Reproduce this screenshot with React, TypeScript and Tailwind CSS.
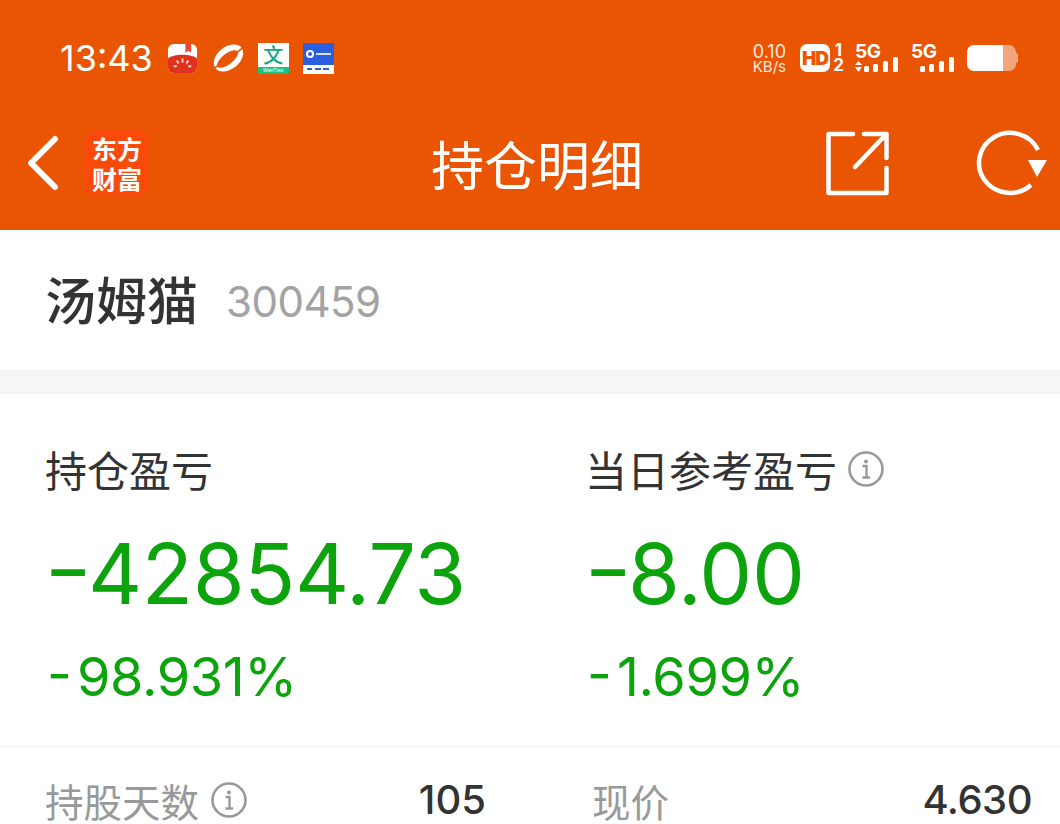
import React from "react";

const InfoIcon = ({ className = "" }: { className?: string }) => (
  <svg viewBox="0 0 36 36" className={className} fill="none" stroke="currentColor">
    <circle cx="18" cy="18" r="16.5" strokeWidth="2.6" />
    <circle cx="18" cy="10.5" r="2" fill="currentColor" stroke="none" />
    <path d="M14.5 15h4v11.5M14.5 26.5h7.5" strokeWidth="2.4" />
  </svg>
);

const Signal = ({ arrows = false }: { arrows?: boolean }) => (
  <svg width="44" height="32" viewBox="0 0 44 32" fill="white" className="overflow-visible">
    <text x="0" y="16" fontSize="19" fontWeight="700" fontFamily="Inter, sans-serif" letterSpacing="-0.5">5G</text>
    {arrows && <path d="M0 23l3.5-4 3.5 4zM0 25h7l-3.5 5z" />}
    <rect x="9" y="24" width="5" height="6" rx="1.5" />
    <rect x="18" y="22" width="5" height="8" rx="1.5" />
    <rect x="28" y="19" width="5" height="11" rx="1.5" />
    <rect x="38" y="15" width="5" height="15" rx="1.5" />
  </svg>
);

const StatusBar = () => (
  <div className="flex h-[78px] items-center justify-between pl-[60px] pr-[42px] pt-[38px]">
    <div className="flex items-center">
      <span className="font-['Inter',sans-serif] text-[36px] leading-none text-white">13:43</span>
      {/* app notification icons */}
      <svg width="31" height="31" viewBox="0 0 32 32" className="ml-[14px]">
        <rect x="1" y="1" width="30" height="30" rx="6" fill="#fff" />
        <path d="M19 1h6v9l-3-2-3 2z" fill="#e5482d" />
        <path d="M1 16c6-5 24-5 30 0v9a6 6 0 0 1-6 6H7a6 6 0 0 1-6-6z" fill="#e0301e" />
        <path d="M16 16v4M10 18l2 3M22 18l-2 3M7 24h3M22 24h3" stroke="#ffd9c8" strokeWidth="2" />
      </svg>
      <svg width="31" height="28" viewBox="0 0 32 28" className="ml-[15px]">
        <ellipse cx="16" cy="14" rx="17" ry="11.5" transform="rotate(-38 16 14)" fill="#fff" />
        <ellipse cx="15" cy="15" rx="13" ry="5.5" transform="rotate(-38 15 15)" fill="#ea5504" />
        <path d="M1 25L8 19M24 9L31 3" stroke="#ea5504" strokeWidth="1.6" />
      </svg>
      <div className="ml-[14px] flex h-[31px] w-[31px] flex-col bg-white">
        <span className="h-[24px] text-center font-['Noto_Sans_CJK_SC',sans-serif] text-[20px] font-medium leading-[24px] text-[#14a87c]">文</span>
        <span className="h-[7px] bg-[#1fbf7f] text-center font-['Inter',sans-serif] text-[5px] leading-[7px] text-white">WenTiao</span>
      </div>
      <div className="ml-[14px] flex h-[31px] w-[31px] flex-col bg-[#2b5fe0]">
        <div className="flex flex-1 items-center gap-[2px] pl-[3px]">
          <span className="h-[8px] w-[8px] rounded-full border-2 border-white" />
          <span className="h-[2px] w-[15px] bg-white/80" />
        </div>
        <div className="flex h-[9px] items-center justify-around bg-white px-[3px]">
          <span className="h-[2px] w-[5px] bg-[#2b5fe0]" />
          <span className="h-[2px] w-[6px] bg-[#2b5fe0]" />
          <span className="h-[2px] w-[6px] bg-[#2b5fe0]" />
        </div>
      </div>
    </div>
    <div className="flex items-center">
      <div className="flex flex-col items-center font-['Inter',sans-serif] text-[#fde8da]">
        <span className="text-[18px] leading-[17px]">0.10</span>
        <span className="text-[15px] leading-[14px]">KB/s</span>
      </div>
      <div className="ml-[14px] flex h-[28px] w-[30px] items-center justify-center rounded-[7px] bg-white font-['Inter',sans-serif] text-[19px] font-black leading-none tracking-[-1px] text-[#ea5504]">HD</div>
      <div className="ml-[3px] flex w-[11px] flex-col items-center font-['Inter',sans-serif] text-[17px] font-bold leading-[15px] text-white">
        <span>1</span>
        <span>2</span>
      </div>
      <div className="ml-[11px]"><Signal arrows /></div>
      <div className="ml-[12px]"><Signal /></div>
      <div className="ml-[12px] flex h-[26px] w-[51px] items-center">
        <div className="flex h-full w-[49px] overflow-hidden rounded-[7px] bg-[#f3a57c]">
          <div className="h-full w-[36px] bg-white" />
        </div>
        <span className="h-[10px] w-[2px] rounded-r bg-[#f3a57c]" />
      </div>
    </div>
  </div>
);

const NavBar = () => (
  <div className="grid h-[152px] grid-cols-[1fr_auto_1fr] items-center pb-[2px] pl-[26px] pr-[12px] pt-[20px]">
    <div className="flex items-center">
      <svg width="36" height="56" viewBox="0 0 36 56" fill="none" stroke="#fff" strokeWidth="6" strokeLinecap="round" strokeLinejoin="round">
        <path d="M29 4L5 28l24 24" />
      </svg>
      <div className="ml-[22px] flex h-[66px] w-[66px] flex-col items-center justify-center rounded-[12px] bg-[#f84a0a] font-['Noto_Sans_CJK_SC',sans-serif] text-[25px] font-bold leading-[30px] text-white">
        <span>东方</span>
        <span>财富</span>
      </div>
    </div>
    <span className="font-['Noto_Sans_CJK_SC',sans-serif] text-[53px] leading-[68px] text-white">持仓明细</span>
    <div className="flex items-center justify-end">
      <svg width="64" height="66" viewBox="0 0 64 66" fill="none" stroke="#fff" strokeWidth="4.5" strokeLinecap="round" strokeLinejoin="round">
        <path d="M27 4H2.500v59h58V38" />
        <path d="M60.500 4H38M60.500 4v24M60.500 4L29 37" strokeWidth="4.500" />
      </svg>
      <svg width="72" height="66" viewBox="0 0 72 66" fill="none" className="ml-[86px]" stroke="#fff" strokeWidth="4.5">
        <path d="M62 20A31 30 0 1 0 55 55" />
        <path d="M52 30h19L61 47z" fill="#fff" stroke="none" />
      </svg>
    </div>
  </div>
);

const Stat = ({ label, value, pct, info = false }: { label: string; value: string; pct: string; info?: boolean }) => (
  <div>
    <div className="-ml-[1px] flex h-[40px] items-center">
      <span className="font-['Noto_Sans_CJK_SC',sans-serif] text-[42px] leading-none text-[#333]">{label}</span>
      {info && <InfoIcon className="ml-[11px] h-[36px] w-[36px] text-[#999]" />}
    </div>
    <div className="mt-[35px] flex font-['Inter',sans-serif] text-[84px] leading-[100px] tracking-[-0.4px] text-[#0ca30c]">
      <span className="-ml-[2px] w-[44px] origin-left -translate-y-[5px] scale-x-125">-</span>
      <span>{value}</span>
    </div>
    <div className="mt-[21px] flex pl-[1px] font-['Inter',sans-serif] text-[54px] leading-[64px] tracking-[-0.4px] text-[#0ca30c]">
      <span className="w-[30px] origin-left -translate-y-[3px]">-</span>
      <span>{pct}</span>
    </div>
  </div>
);

export default function App() {
  return (
    <div className="h-[824px] w-[1060px] bg-white">
      <div className="h-[230px] bg-[#ea5504]">
        <StatusBar />
        <NavBar />
      </div>

      <div className="flex h-[140px] items-center pb-[4px] pl-[45px]">
        <span className="font-['Noto_Sans_CJK_SC',sans-serif] text-[51px] font-medium leading-none text-[#333]">汤姆猫</span>
        <span className="ml-[28px] pt-[8px] font-['Inter',sans-serif] text-[42px] leading-none tracking-[-0.5px] text-[#a3a3a3]">300459</span>
      </div>
      <div className="h-[24px] bg-[#f5f6f8]" />

      <div className="grid grid-cols-[540px_1fr] pl-[46px] pt-[55px]">
        <Stat label="持仓盈亏" value="42854.73" pct="98.931%" />
        <Stat label="当日参考盈亏" value="8.00" pct="1.699%" info />
      </div>

      <div className="mt-[37px] h-px bg-[#f3f3f3]" />

      <div className="grid grid-cols-2 pt-[29px]">
        <div className="flex items-center justify-between pl-[45px] pr-[44px]">
          <div className="flex items-center">
            <span className="font-['Noto_Sans_CJK_SC',sans-serif] text-[38.5px] leading-[48px] text-[#999]">持股天数</span>
            <InfoIcon className="ml-[12px] h-[36px] w-[36px] text-[#999]" />
          </div>
          <span className="font-['Inter',sans-serif] text-[40px] font-medium leading-[48px] tracking-[0px] text-[#333]">105</span>
        </div>
        <div className="flex items-center justify-between pl-[62px] pr-[28px]">
          <span className="font-['Noto_Sans_CJK_SC',sans-serif] text-[38.5px] leading-[48px] text-[#999]">现价</span>
          <span className="font-['Inter',sans-serif] text-[40px] font-medium leading-[48px] tracking-[-0.5px] text-[#333]">4.630</span>
        </div>
      </div>
    </div>
  );
}
